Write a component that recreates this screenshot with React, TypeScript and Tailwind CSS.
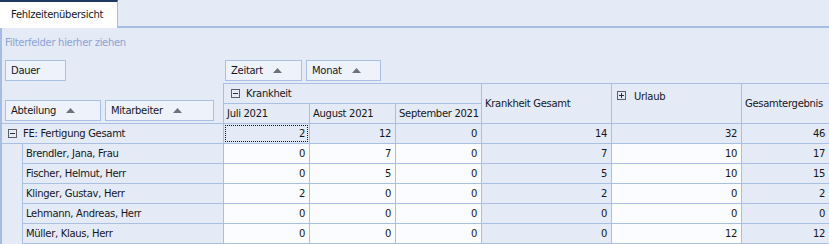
import React from "react";

type Row = { name: string; juli: number; aug: number; sep: number; krank: number; urlaub: number; gesamt: number };

const rows: Row[] = [
  { name: "Brendler, Jana, Frau", juli: 0, aug: 7, sep: 0, krank: 7, urlaub: 10, gesamt: 17 },
  { name: "Fischer, Helmut, Herr", juli: 0, aug: 5, sep: 0, krank: 5, urlaub: 10, gesamt: 15 },
  { name: "Klinger, Gustav, Herr", juli: 2, aug: 0, sep: 0, krank: 2, urlaub: 0, gesamt: 2 },
  { name: "Lehmann, Andreas, Herr", juli: 0, aug: 0, sep: 0, krank: 0, urlaub: 0, gesamt: 0 },
  { name: "Müller, Klaus, Herr", juli: 0, aug: 0, sep: 0, krank: 0, urlaub: 12, gesamt: 12 },
];

function SortArrow() {
  return (
    <svg width="9" height="5" viewBox="0 0 9 5" className="shrink-0">
      <path d="M0 5 L4.5 0 L9 5 Z" fill="#6e737b" />
    </svg>
  );
}

function ExpandBox({ open }: { open: boolean }) {
  return (
    <svg width="9" height="9" viewBox="0 0 9 9" className="shrink-0">
      <rect x="0.5" y="0.5" width="8" height="8" fill="none" stroke="#5a5f66" />
      <path d="M2 4.5 H7" stroke="#2a2d33" />
      {!open && <path d="M4.5 2 V7" stroke="#2a2d33" />}
    </svg>
  );
}

function FieldBox({ label, arrow, w }: { label: string; arrow?: boolean; w: string }) {
  return (
    <div className={`${w} h-[21px] flex items-center gap-[10px] pl-[5px] border border-[#a9c0e2] bg-[#eef3fb]`}>
      <span>{label}</span>
      {arrow && <SortArrow />}
    </div>
  );
}

const cell = "border-r border-b border-[#a9c0e2] flex items-center justify-end pr-[4px]";
const white = "bg-[#fbfcff]";

export default function App() {
  return (
    <div className="w-[829px] h-[244px] overflow-hidden bg-[#e4eaf6] font-['DejaVu_Sans',Verdana,sans-serif] text-[10px] tracking-[-0.3px] text-[#15171c]">
      {/* Tabs */}
      <div className="h-[28px] flex border-b-2 border-[#a5bde0]">
        <div className="w-[118px] h-[28px] bg-white border-t-2 border-[#1f3a62] border-r border-r-[#a5bde0] flex items-center pl-[11px] pb-[2px]">
          Fehlzeitenübersicht
        </div>
      </div>

      <div className="border-l-2 border-[#a5bde0]">
        {/* Filterbereich */}
        <div className="h-[28px] flex items-center pl-[3px] text-[#8ba4d4]">Filterfelder hierher ziehen</div>

        {/* Datenfelder + Spaltenfelder */}
        <div className="h-[27px] flex pt-[4px]">
          <div className="w-[222px] pl-[3px]">
            <FieldBox label="Dauer" w="w-[61px]" />
          </div>
          <div className="flex gap-[4px] pl-[1px]">
            <FieldBox label="Zeitart" arrow w="w-[77px]" />
            <FieldBox label="Monat" arrow w="w-[75px]" />
          </div>
        </div>

        {/* Pivot-Kopf */}
        <div className="grid grid-cols-[222px_86px_86px_86px_130px_130px_87px] grid-rows-[21px_20px]">
          <div className="row-span-2 border-r border-b border-[#a9c0e2] flex items-end gap-[4px] pl-[3px] pb-[2px]">
            <FieldBox label="Abteilung" arrow w="w-[96px]" />
            <FieldBox label="Mitarbeiter" arrow w="w-[109px]" />
          </div>
          <div className="col-span-3 border-t border-r border-b border-[#a9c0e2] flex items-center gap-[6px] pl-[7px]">
            <ExpandBox open />
            <span>Krankheit</span>
          </div>
          <div className="row-span-2 border-t border-r border-b border-[#a9c0e2] flex items-center pl-[3px]">
            Krankheit Gesamt
          </div>
          <div className="row-span-2 border-t border-r border-b border-[#a9c0e2] flex items-start gap-[8px] pl-[5px] pt-[5px]">
            <span className="mt-[2px]">
              <ExpandBox open={false} />
            </span>
            <span>Urlaub</span>
          </div>
          <div className="row-span-2 border-t border-b border-[#a9c0e2] flex items-center pl-[3px]">
            Gesamtergebnis
          </div>
          <div className="border-r border-b border-[#a9c0e2] flex items-center pl-[3px]">Juli 2021</div>
          <div className="border-r border-b border-[#a9c0e2] flex items-center pl-[3px]">August 2021</div>
          <div className="border-r border-b border-[#a9c0e2] flex items-center pl-[3px]">September 2021</div>
        </div>

        {/* Pivot-Daten */}
        <div className="grid grid-cols-[222px_86px_86px_86px_130px_130px_87px] auto-rows-[20px]">
          <div className="border-r border-b border-[#a9c0e2] flex items-center gap-[6px] pl-[6px]">
            <ExpandBox open />
            <span>FE: Fertigung Gesamt</span>
          </div>
          <div className="border-r border-b border-[#a9c0e2] p-[1px]">
            <div className="h-full border border-dotted border-[#111] flex items-center justify-end pr-[2px]">2</div>
          </div>
          <div className={cell}>12</div>
          <div className={cell}>0</div>
          <div className={cell}>14</div>
          <div className={cell}>32</div>
          <div className="border-b border-[#a9c0e2] flex items-center justify-end pr-[4px]">46</div>

          {rows.map((r) => (
            <React.Fragment key={r.name}>
              <div className="flex">
                <div className="w-[20px]" />
                <div className="flex-1 border-l border-r border-b border-[#a9c0e2] flex items-center pl-[3px]">{r.name}</div>
              </div>
              <div className={`${cell} ${white}`}>{r.juli}</div>
              <div className={`${cell} ${white}`}>{r.aug}</div>
              <div className={`${cell} ${white}`}>{r.sep}</div>
              <div className={cell}>{r.krank}</div>
              <div className={`${cell} ${white}`}>{r.urlaub}</div>
              <div className="border-b border-[#a9c0e2] flex items-center justify-end pr-[4px]">{r.gesamt}</div>
            </React.Fragment>
          ))}
        </div>
      </div>
    </div>
  );
}
